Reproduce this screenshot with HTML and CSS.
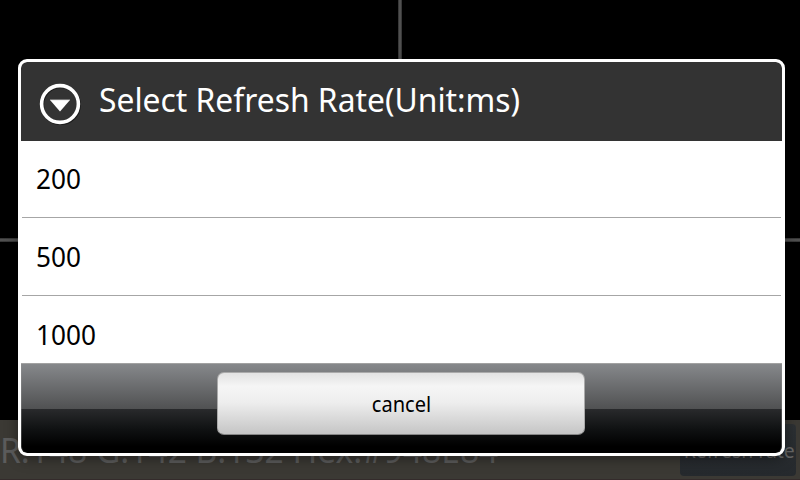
FILE: index.html
```
<!DOCTYPE html>
<html lang="en">
<head>
<meta charset="utf-8">
<title>Select Refresh Rate</title>
<link rel="stylesheet" href="styles.css">
</head>
<body>
<main class="screen">
  <div class="crosshair-v"></div>
  <div class="crosshair-h"></div>
  <footer class="status">
    <span class="status-text">R:148 G:142 B:132 Hex:#948E84</span>
    <button class="refresh"><span>Refresh rate</span></button>
  </footer>
  <section class="dialog">
    <header class="dialog-head">
      <svg class="dialog-icon" viewBox="0 0 44 44" width="44" height="44">
        <circle cx="22.7" cy="22.9" r="18.4" fill="none" stroke="#1c1c1c" stroke-width="3.6"/>
        <circle cx="22" cy="22" r="18.4" fill="none" stroke="#fff" stroke-width="3.6"/>
        <path d="M12 18H32L22 29.6Z" fill="#fff"/>
        <path d="M12 17.7H32" stroke="#999" stroke-width=".8"/>
      </svg>
      <h1 class="dialog-title"><span>Select Refresh Rate(Unit:ms)</span></h1>
    </header>
    <ul class="options">
      <li><span>200</span></li>
      <li><span>500</span></li>
      <li><span>1000</span></li>
    </ul>
    <div class="dialog-actions">
      <button class="cancel"><span>cancel</span></button>
    </div>
  </section>
</main>
</body>
</html>
```
FILE: styles.css
```
* { box-sizing: border-box; }
body { margin: 0; background: #000; font-family: "Noto Sans", "Open Sans", sans-serif; }
h1, ul { margin: 0; padding: 0; font-weight: 400; }
span { display: block; white-space: nowrap; }
button { font-family: inherit; padding: 0; }

.screen { position: relative; width: 800px; height: 480px; overflow: hidden; display: flex; flex-direction: column; justify-content: flex-end; }
.crosshair-v { position: absolute; left: 398px; top: 0; width: 4px; height: 420px; background: linear-gradient(90deg, #282828, #505050 30%, #505050 70%, #282828); }
.crosshair-h { position: absolute; left: 0; top: 238px; width: 800px; height: 4px; background: linear-gradient(#282828, #505050 30%, #505050 70%, #282828); }

.status { height: 60px; display: flex; justify-content: space-between; background: #3b3934; border-bottom: 1px solid #342b2b; }
.status-text { font-size: 34px; line-height: 60px; color: #5c5c5c; transform: scaleX(.985); transform-origin: left; }
.refresh { width: 116px; height: 52px; margin: 4px 4px 0 0; border: 0; border-radius: 4px; background: linear-gradient(#2c3033, #25292d); color: #666; font-size: 20px; line-height: 53px; }
.refresh span { padding-left: 2px; transform: scaleX(.97); }

.dialog { position: absolute; left: 18px; top: 59px; width: 767px; height: 397px; border: 3px solid #fff; border-radius: 9px; background: #fff; overflow: hidden; display: flex; flex-direction: column; box-shadow: 0 3px 14px rgba(0, 0, 0, .4); }
.dialog-head { height: 79px; flex: none; display: flex; align-items: flex-start; background: #333; border-radius: 6px 6px 0 0; }
.dialog-icon { margin: 20px 0 0 17px; flex: none; }
.dialog-title { margin-left: 17px; font-size: 33px; line-height: 76px; color: #fff; }
.dialog-title span { transform: scaleX(.964); transform-origin: left; }
.options { list-style: none; flex: 1; min-height: 0; overflow: hidden; }
.options li { height: 78px; margin: 0 1px; padding-left: 14px; border-bottom: 1px solid #a6a6a6; font-size: 27px; line-height: 78px; color: #000; }
.options li:first-child { height: 77px; line-height: 76px; }
.options span { transform: scaleX(.97); transform-origin: left; }
.dialog-actions { height: 90px; flex: none; display: flex; justify-content: center; padding: 8px 1px 0 0; border-top: 1px solid #a2a2a2; border-radius: 0 0 6px 6px; box-shadow: inset 1px 0 rgba(150, 150, 150, .35), inset -1px 0 rgba(150, 150, 150, .35); background: linear-gradient(#86888b, #505152) top / 100% 45px no-repeat, linear-gradient(#292a2c, #101213 45%, #000 85%) bottom / 100% 44px no-repeat; }
.cancel { width: 368px; height: 63px; border: 1px solid #aaa; border-bottom: 1px solid #858585; border-radius: 7px; background: linear-gradient(#e2e2e2, #f5f5f5 22%, #eee 48%, #c5c5c5); color: #000; font-size: 21px; line-height: 63px; }
.cancel span { padding-left: 1px; transform: scaleX(.955); }
```
